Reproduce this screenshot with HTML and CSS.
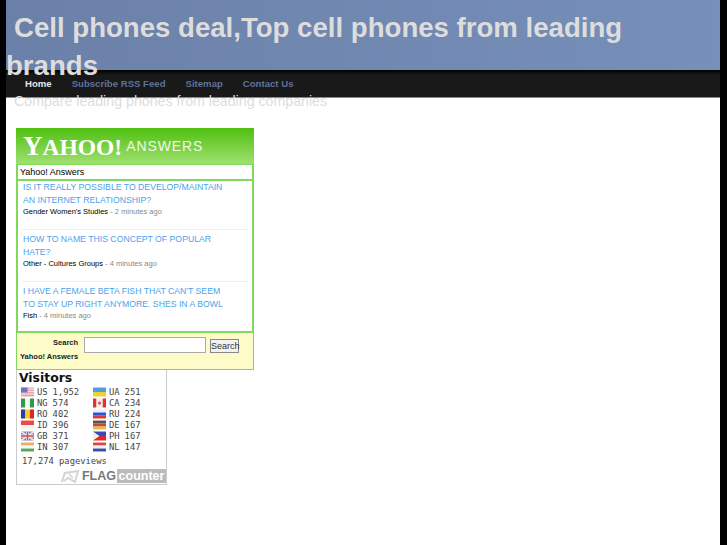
FILE: index.html
```html
<!DOCTYPE html>
<html lang="en">
<head>
  <meta charset="UTF-8">
  <title>Cell phones deal</title>
  <link rel="stylesheet" href="styles.css">
</head>
<body>
<div class="page">
  <div class="header">
    <h1>Cell phones deal,Top cell phones from leading brands</h1>
    <h2>Compare leading phones from leading companies</h2>
  </div>
  <ul class="nav">
    <li class="current"><a href="#">Home</a></li>
    <li><a href="#">Subscribe RSS Feed</a></li>
    <li><a href="#">Sitemap</a></li>
    <li><a href="#">Contact Us</a></li>
  </ul>
  <div class="content">
    <div class="ya-box">
      <div class="ya-logo"><span class="ya-yahoo"><span class="ya-y">Y</span>AHOO!</span><span class="ya-answers">ANSWERS</span></div>
      <div class="ya-title">Yahoo! Answers</div>
      <div class="ya-list">
        <div class="ya-item">
          <a href="#">IS IT REALLY POSSIBLE TO DEVELOP/MAINTAIN AN INTERNET RELATIONSHIP?</a>
          <p><b>Gender Women's Studies</b> - 2 minutes ago</p>
        </div>
        <div class="ya-item">
          <a href="#">HOW TO NAME THIS CONCEPT OF POPULAR HATE?</a>
          <p><b>Other - Cultures Groups</b> - 4 minutes ago</p>
        </div>
        <div class="ya-item">
          <a href="#">I HAVE A FEMALE BETA FISH THAT CAN'T SEEM TO STAY UP RIGHT ANYMORE. SHES IN A BOWL</a>
          <p><b>Fish</b> - 4 minutes ago</p>
        </div>
      </div>
      <div class="ya-search">
        <div class="ya-label">Search<br>Yahoo! Answers</div>
        <input type="text" class="ya-input">
        <button class="ya-btn">Search</button>
      </div>
    </div>
    <div class="flags">
      <div class="flags-title">Visitors</div>
      <div class="flags-grid">
        <div class="flag-row"><svg class="flag" viewBox="0 0 16 11"><rect width="16" height="11" fill="#e8a0a8"/><path d="M0 2h16M0 5h16M0 8h16" stroke="#f4eef0" stroke-width="1.2"/><rect width="8" height="6" fill="#6a78c0"/></svg><span class="code">US</span><span>1,952</span></div>
        <div class="flag-row"><svg class="flag" viewBox="0 0 16 11"><rect width="16" height="5.5" fill="#4c9fe0"/><rect y="5.5" width="16" height="5.5" fill="#f0d030"/></svg><span class="code">UA</span><span>251</span></div>
        <div class="flag-row"><svg class="flag" viewBox="0 0 16 11"><rect width="16" height="11" fill="#f4f4f0"/><rect width="5" height="11" fill="#2f9a4a"/><rect x="11" width="5" height="11" fill="#2f9a4a"/></svg><span class="code">NG</span><span>574</span></div>
        <div class="flag-row"><svg class="flag" viewBox="0 0 16 11"><rect width="16" height="11" fill="#f4f0f0"/><rect width="4" height="11" fill="#e03030"/><rect x="12" width="4" height="11" fill="#e03030"/><circle cx="8" cy="5.5" r="2" fill="#e85050"/></svg><span class="code">CA</span><span>234</span></div>
        <div class="flag-row"><svg class="flag" viewBox="0 0 16 11"><rect width="16" height="11" fill="#f2d020"/><rect width="5" height="11" fill="#2a3fa8"/><rect x="11" width="5" height="11" fill="#d82828"/></svg><span class="code">RO</span><span>402</span></div>
        <div class="flag-row"><svg class="flag" viewBox="0 0 16 11"><rect width="16" height="11" fill="#f0f0f4"/><rect y="3.7" width="16" height="3.7" fill="#3050d8"/><rect y="7.4" width="16" height="3.6" fill="#e03838"/></svg><span class="code">RU</span><span>224</span></div>
        <div class="flag-row"><svg class="flag" viewBox="0 0 16 11"><rect width="16" height="5.5" fill="#ec4848"/><rect y="5.5" width="16" height="5.5" fill="#f4f2f2"/></svg><span class="code">ID</span><span>396</span></div>
        <div class="flag-row"><svg class="flag" viewBox="0 0 16 11"><rect width="16" height="3.7" fill="#555"/><rect y="3.7" width="16" height="3.7" fill="#c84838"/><rect y="7.4" width="16" height="3.6" fill="#e0c040"/></svg><span class="code">DE</span><span>167</span></div>
        <div class="flag-row"><svg class="flag" viewBox="0 0 16 11"><rect width="16" height="11" fill="#7a80c8"/><path d="M0 0L16 11M16 0L0 11" stroke="#f0e8ee" stroke-width="2"/><path d="M8 0V11M0 5.5H16" stroke="#f0e8ee" stroke-width="3.4"/><path d="M8 0V11M0 5.5H16" stroke="#d84850" stroke-width="1.6"/></svg><span class="code">GB</span><span>371</span></div>
        <div class="flag-row"><svg class="flag" viewBox="0 0 16 11"><rect width="16" height="5.5" fill="#3848c0"/><rect y="5.5" width="16" height="5.5" fill="#e02828"/><path d="M0 0L8 5.5L0 11Z" fill="#f4f0e0"/></svg><span class="code">PH</span><span>167</span></div>
        <div class="flag-row"><svg class="flag" viewBox="0 0 16 11"><rect width="16" height="3.7" fill="#e8b060"/><rect y="3.7" width="16" height="3.7" fill="#f4f4f0"/><rect y="7.4" width="16" height="3.6" fill="#58a858"/></svg><span class="code">IN</span><span>307</span></div>
        <div class="flag-row"><svg class="flag" viewBox="0 0 16 11"><rect width="16" height="3.7" fill="#d84840"/><rect y="3.7" width="16" height="3.7" fill="#f4f0f0"/><rect y="7.4" width="16" height="3.6" fill="#3a50a8"/></svg><span class="code">NL</span><span>147</span></div>
      </div>
      <div class="flags-views">17,274 pageviews</div>
      <div class="flags-brand">
        <svg class="brand-icon" viewBox="0 0 20 13"><path d="M2 12L5 2M5 3L18 1L15 12L8 8L4 11" fill="none" stroke="#d4d4d4" stroke-width="2"/><path d="M9 4L13 8" stroke="#ddd" stroke-width="2"/></svg>
        <span class="brand-flag">FLAG</span><span class="brand-counter">counter</span>
      </div>
    </div>
  </div>
</div>
</body>
</html>
```

FILE: styles.css
```css
html, body { margin: 0; padding: 0; height: 100%; }
body { background: #000; font-family: "Liberation Sans", Arial, sans-serif; overflow: hidden; }
.page { background: #fff; margin: 0 7px 0 6px; height: 100%; }

.header { background: linear-gradient(90deg, #6b80a8, #7690ba); height: 70px; }
.header h1 { margin: 0; padding: 9px 20px 0 0; font-size: 27.6px; line-height: 38px; font-weight: bold; color: #ddd; text-indent: 8px; }
.header h2 { margin: 8px 0 0 8px; font-size: 14.2px; line-height: 16px; font-weight: normal; color: #ddd; }

.nav { list-style: none; margin: 0; padding: 0 0 0 9px; height: 27px; background: linear-gradient(#000, #191919 5px); border-bottom: 1px solid #888; display: flex; }
.nav li { padding: 6px 10px 0; line-height: 12px; }
.nav a { font-size: 9.6px; font-weight: bold; color: #5f719b; text-decoration: none; }
.nav .current a { color: #e8e8e8; }

.content { padding: 30px 0 0 10px; }
.ya-box { width: 238px; background: #7fd95a; }
.ya-logo { height: 36px; background: linear-gradient(#4fc010, #a0e070); color: #fff; display: flex; align-items: center; padding-left: 7px; }
.ya-yahoo { font-family: "Liberation Serif", serif; font-size: 23.5px; font-weight: bold; }
.ya-y { font-size: 27px; }
.ya-answers { font-size: 14px; letter-spacing: 0.9px; margin-left: 4px; color: #f0f8e8; }
.ya-title { background: #fff; margin: 0 1px 1px; border: 1px solid #7fd95a; font-size: 9px; line-height: 14px; padding: 0 2px; }
.ya-list { background: #fff; margin: 0 1px; border: 1px solid #7fd95a; border-top: 0; padding: 0 5px; }
.ya-item { height: 48px; padding-top: 3px; border-bottom: 1px dotted #ddd; }
.ya-item:first-child { padding-top: 0; }
.ya-item:last-child { border-bottom: 0; height: 46px; }
.ya-item a { display: block; width: 206px; font-size: 8.7px; line-height: 13px; color: #4aa3ee; text-decoration: none; }
.ya-item p { margin: 0; font-size: 7.5px; line-height: 10px; color: #888; }
.ya-item b { font-weight: normal; color: #000; }
.ya-search { background: #fdfcc8; border: 1px solid #7fd95a; height: 36px; display: flex; align-items: flex-start; padding-left: 3px; }
.ya-label { font-size: 7.5px; font-weight: bold; text-align: right; line-height: 14px; margin: 3px 6px 0 0; color: #222; }
.ya-input { width: 118px; height: 12px; padding: 1px; border: 1px solid #aaa; margin: 4px 4px 0 0; }
.ya-btn { font-family: "Liberation Sans", Arial, sans-serif; font-size: 9px; height: 14px; width: 29px; padding: 0; margin-top: 6px; border: 1px solid #888; background: #f2f2f2; color: #333; }

.flags { width: 149px; height: 114px; border: 1px solid #ccc; border-top: 0; font-family: "DejaVu Sans Mono", monospace; font-size: 8.8px; color: #444; }
.flags-title { font-family: "DejaVu Sans", sans-serif; font-weight: bold; font-size: 12.4px; color: #111; padding: 0 0 0 2px; line-height: 16px; }
.flags-grid { display: grid; grid-template-columns: 72px 1fr; padding: 0 0 0 4px; }
.flag-row { display: flex; align-items: center; height: 11px; }
.flag { width: 13px; height: 10px; margin-right: 3px; }
.code { margin-right: 5px; }
.flags-views { padding: 4px 0 0 5px; line-height: 11px; }
.flags-brand { display: flex; justify-content: flex-end; align-items: center; font-family: "Liberation Sans", Arial, sans-serif; font-weight: bold; font-size: 12.5px; line-height: 14px; margin-top: 2px; }
.brand-icon { width: 20px; height: 13px; margin-right: 2px; }
.brand-flag { color: #777; margin-right: 1px; }
.brand-counter { background: #bbb; color: #fff; width: 49px; text-align: center; }
```
